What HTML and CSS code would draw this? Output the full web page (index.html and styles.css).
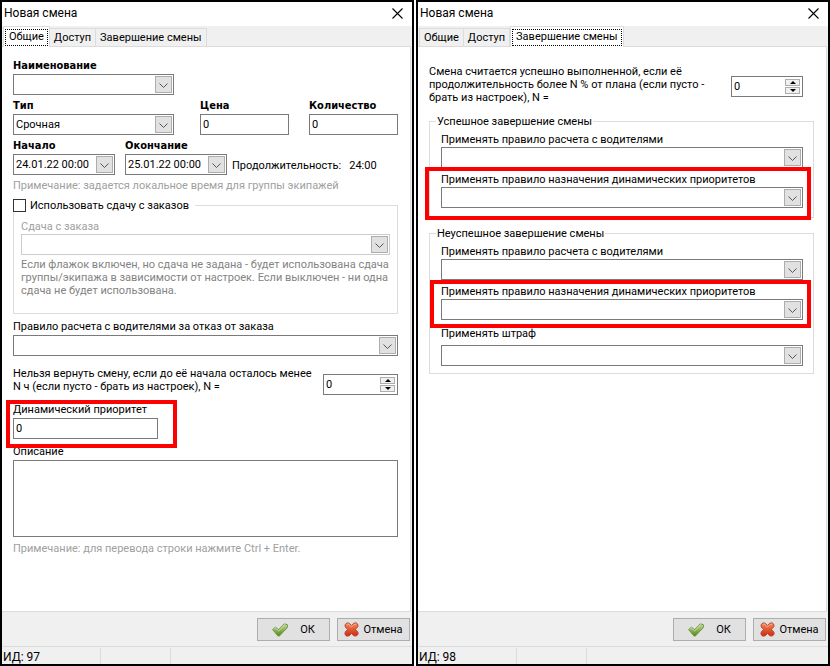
FILE: index.html
```
<!DOCTYPE html>
<html lang="ru">

<head>
    <meta charset="utf-8">
    <meta name="viewport" content="width=device-width, initial-scale=1.0">
    <title>Новая смена</title>
    <link rel="stylesheet" href="styles.css">
</head>

<body>

    <!-- icons used by both windows -->
    <svg class="sprite" aria-hidden="true">
        <defs>
            <linearGradient id="green" x1="0" y1="0" x2="0" y2="1">
                <stop offset="0" stop-color="#c5dc9c" />
                <stop offset="1" stop-color="#4f8a10" />
            </linearGradient>
            <linearGradient id="red" x1="0" y1="0" x2="0" y2="1">
                <stop offset="0" stop-color="#f08a5c" />
                <stop offset="1" stop-color="#cf2a0c" />
            </linearGradient>
        </defs>
        <symbol id="close" viewBox="0 0 11 11">
            <path d="M0.5 0.5L10.5 10.5M10.5 0.5L0.5 10.5" fill="none" stroke="#000" stroke-width="1.1" />
        </symbol>
        <symbol id="check" viewBox="0 0 16 14">
            <path d="M0.6 6.6L3.4 4.2L6.6 6.6L12.4 0.8L15.5 1.8L15.3 4.6L7.2 13.2L5.6 12.6Z" fill="url(#green)" stroke="#6c8f45" stroke-width="0.9" stroke-linejoin="round" />
            <path d="M2 6.2L3.4 5.2L6.6 7.8L12.8 1.8" fill="none" stroke="#e3efcb" stroke-width="0.7" />
        </symbol>
        <symbol id="cross" viewBox="0 0 15 15">
            <path d="M1.2 2.4L3.2 0.8L5.4 1.4L7.5 3.4L9.8 1.2L12.2 0.8L14 2.6L13.8 4.8L11.4 7.3L13.8 10L14.2 12.2L12.2 14L9.8 13.8L7.5 11.6L5.2 13.8L2.8 14.2L0.9 12.4L1.2 10L3.6 7.4L1.2 5Z" fill="url(#red)" stroke="#b5402c" stroke-width="0.9" stroke-linejoin="round" />
            <path d="M2.4 3L3.6 2L5 2.6L7.5 5L10 2.4L12 2.2" fill="none" stroke="#f9b898" stroke-width="0.8" />
        </symbol>
    </svg>

    <section class="window">
        <header class="titlebar">
            <h1>Новая смена</h1>
            <button class="close" aria-label="Закрыть"><svg><use href="#close" /></svg></button>
        </header>

        <nav class="tabs">
            <button class="tab valgt"><span>Общие</span></button>
            <button class="tab"><span>Доступ</span></button>
            <button class="tab"><span>Завершение смены</span></button>
        </nav>

        <main class="pane">
            <div class="row">
                <div class="field wide">
                    <label class="bold" for="name">Наименование</label>
                    <select id="name"><option></option></select>
                </div>
                <div class="field short"></div>
                <div class="field short"></div>
            </div>
            <div class="row">
                <div class="field wide">
                    <label class="bold" for="type">Тип</label>
                    <select id="type"><option>Срочная</option></select>
                </div>
                <div class="field short">
                    <label class="bold" for="price">Цена</label>
                    <input type="text" id="price" value="0">
                </div>
                <div class="field short">
                    <label class="bold" for="count">Количество</label>
                    <input type="text" id="count" value="0">
                </div>
            </div>
            <div class="row dates">
                <div class="field date">
                    <label class="bold" for="begin">Начало</label>
                    <select id="begin"><option>24.01.22 00:00</option></select>
                </div>
                <div class="field date">
                    <label class="bold" for="end">Окончание</label>
                    <select id="end"><option>25.01.22 00:00</option></select>
                </div>
                <p class="duration"><span>Продолжительность:</span><span>24:00</span></p>
            </div>
            <p class="note">Примечание: задается локальное время для группы экипажей</p>

            <fieldset class="change">
                <legend><label><input type="checkbox">Использовать сдачу с заказов</label></legend>
                <div class="field">
                    <label for="change">Сдача с заказа</label>
                    <select id="change" disabled><option></option></select>
                </div>
                <p class="hint">Если флажок включен, но сдача не задана - будет использована сдача<br>группы/экипажа в зависимости от настроек. Если выключен - ни одна<br>сдача не будет использована.</p>
            </fieldset>

            <div class="field rule">
                <label for="refuse">Правило расчета с водителями за отказ от заказа</label>
                <select id="refuse"><option></option></select>
            </div>

            <div class="ask ask-return">
                <label for="hours">Нельзя вернуть смену, если до её начала осталось менее<br>N ч (если пусто - брать из настроек), N =</label>
                <div class="spin">
                    <input type="text" id="hours" value="0">
                    <div class="arrows"><button aria-label="Больше"></button><button aria-label="Меньше"></button></div>
                </div>
            </div>

            <div class="field priority marked">
                <label for="priority">Динамический приоритет</label>
                <input type="text" id="priority" value="0">
            </div>

            <div class="field about">
                <label for="about">Описание</label>
                <textarea id="about"></textarea>
            </div>
            <p class="note">Примечание: для перевода строки нажмите Ctrl + Enter.</p>
        </main>

        <div class="actions">
            <button class="action ok"><svg><use href="#check" /></svg>ОК</button>
            <button class="action"><svg><use href="#cross" /></svg>Отмена</button>
        </div>
        <footer class="status"><span class="id">ИД: 97</span><span class="cell"></span></footer>
    </section>

    <section class="window">
        <header class="titlebar">
            <h1>Новая смена</h1>
            <button class="close" aria-label="Закрыть"><svg><use href="#close" /></svg></button>
        </header>

        <nav class="tabs">
            <button class="tab"><span>Общие</span></button>
            <button class="tab"><span>Доступ</span></button>
            <button class="tab valgt"><span>Завершение смены</span></button>
        </nav>

        <main class="pane">
            <div class="ask ask-done">
                <label for="percent">Смена считается успешно выполненной, если её<br>продолжительность более N % от плана (если пусто -<br>брать из настроек), N =</label>
                <div class="spin">
                    <input type="text" id="percent" value="0">
                    <div class="arrows"><button aria-label="Больше"></button><button aria-label="Меньше"></button></div>
                </div>
            </div>

            <fieldset class="result">
                <legend>Успешное завершение смены</legend>
                <div class="field">
                    <label for="rule1">Применять правило расчета с водителями</label>
                    <select id="rule1"><option></option></select>
                </div>
                <div class="field marked">
                    <label for="dyn1">Применять правило назначения динамических приоритетов</label>
                    <select id="dyn1"><option></option></select>
                </div>
            </fieldset>

            <fieldset class="result failed">
                <legend>Неуспешное завершение смены</legend>
                <div class="field">
                    <label for="rule2">Применять правило расчета с водителями</label>
                    <select id="rule2"><option></option></select>
                </div>
                <div class="field marked">
                    <label for="dyn2">Применять правило назначения динамических приоритетов</label>
                    <select id="dyn2"><option></option></select>
                </div>
                <div class="field fine">
                    <label for="fine">Применять штраф</label>
                    <select id="fine"><option></option></select>
                </div>
            </fieldset>
        </main>

        <div class="actions">
            <button class="action ok"><svg><use href="#check" /></svg>ОК</button>
            <button class="action"><svg><use href="#cross" /></svg>Отмена</button>
        </div>
        <footer class="status"><span class="id">ИД: 98</span><span class="cell"></span></footer>
    </section>

</body>

</html>
```
FILE: styles.css
```
* {
    box-sizing: border-box;
}

body {
    margin: 0;
    min-height: 100vh;
    display: grid;
    grid-template-columns: 1fr 1fr;
    gap: 2px;
    background-color: white;
    color: black;
    font-family: Roboto, "Noto Sans", sans-serif;
    font-size: 11px;
    line-height: 13px;
}

h1,
p,
fieldset,
legend {
    margin: 0;
    padding: 0;
}

button,
input,
select,
textarea {
    font: inherit;
    color: inherit;
    margin: 0;
    border-radius: 0;
}

.sprite {
    position: absolute;
    width: 0;
    height: 0;
}

.window {
    display: flex;
    flex-direction: column;
    min-width: 0;
    border: 2px solid black;
    background-color: #f0f0f0;
}

/* title */
.titlebar {
    display: flex;
    align-items: center;
    justify-content: space-between;
    height: 24px;
    padding: 0 9px 2px 2px;
    background-color: white;
}

h1 {
    font-size: 12px;
    font-weight: normal;
}

.close {
    padding: 0;
    border: none;
    background: none;
}

.close svg {
    display: block;
    width: 11px;
    height: 11px;
}

/* tabs */
.tabs {
    display: flex;
    align-items: flex-end;
    height: 20px;
    padding-left: 1px;
}

.tab {
    height: 18px;
    padding: 0 4px;
    border: 1px solid #dcdcdc;
    border-width: 1px 1px 0 0;
    background-color: #f0f0f0;
    white-space: nowrap;
}

.tab:first-child {
    border-left-width: 1px;
}

.tab.valgt {
    position: relative;
    height: 21px;
    margin-bottom: -1px;
    padding: 0 1px;
    border-left-width: 1px;
    background-color: white;
}

.valgt span {
    display: block;
    height: 17px;
    padding: 0 3px;
    border: 1px dotted black;
}

/* page of a tab */
.pane {
    flex: 1;
    margin-right: 1px;
    padding: 12px 12px 12px 11px;
    border: 1px solid #dcdcdc;
    border-left: none;
    background-color: white;
}

.row {
    display: flex;
    gap: 20px;
    margin-bottom: 4px;
}

.field {
    display: flex;
    flex-direction: column;
    gap: 2px;
    min-width: 0;
}

.wide {
    flex: 161;
    margin-right: 6px;
}

.short {
    flex: 89;
}

.dates {
    gap: 10px;
}

.date {
    flex: 0 0 102px;
}

.bold {
    font-family: "DejaVu Sans Condensed", "DejaVu Sans", sans-serif;
    font-weight: bold;
}

.duration {
    display: flex;
    gap: 8px;
    align-self: flex-end;
    margin: 0 0 3px -5px;
    white-space: nowrap;
}

input[type="text"],
select,
textarea {
    width: 100%;
    height: 21px;
    padding: 0 2px;
    border: 1px solid #7a7a7a;
    background-color: white;
    outline: none;
}

select {
    appearance: none;
    background-image: url("data:image/svg+xml,%3Csvg xmlns='http://www.w3.org/2000/svg' width='17' height='17'%3E%3Crect x='.5' y='.5' width='16' height='16' fill='%23e1e1e1' stroke='%23adadad'/%3E%3Cpath d='M4.5 7.5l4 4 4-4' fill='none' stroke='%23555'/%3E%3C/svg%3E");
    background-repeat: no-repeat;
    background-position: right 1px center;
}

select:disabled {
    border-color: #ccc;
    opacity: 1;
}

textarea {
    display: block;
    height: 77px;
    resize: none;
}

.note {
    color: #a0a0a0;
}

/* group boxes */
fieldset {
    min-width: 0;
    border: 1px solid #dcdcdc;
}

.change {
    margin-top: 7px;
    padding: 8px 7px 16px 7px;
}

.change legend {
    margin-left: -8px;
    padding-right: 6px;
    background-color: white;
}

.change legend label {
    display: flex;
    gap: 4px;
}

.change .field {
    gap: 1px;
    color: #a0a0a0;
}

.change input {
    appearance: none;
    width: 13px;
    height: 13px;
    border: 1px solid #333;
    background-color: white;
}

.hint {
    margin-top: 3px;
    color: #838383;
    white-space: nowrap;
}

.rule {
    margin-top: 6px;
}

/* question with a spinner */
.ask {
    display: flex;
    justify-content: space-between;
    white-space: nowrap;
}

.ask-return {
    margin: 11px 0 8px;
}

.ask-return .spin {
    width: 75px;
    margin-top: 7px;
}

.ask-done {
    margin: 6px 11px 11px 0;
}

.ask-done .spin {
    margin-top: 11px;
}

.spin {
    display: flex;
    width: 72px;
    height: 21px;
    padding: 2px;
    border: 1px solid #7a7a7a;
}

.spin input[type="text"] {
    flex: 1;
    min-width: 0;
    height: 15px;
    padding: 0;
    border: none;
}

.arrows {
    display: flex;
    flex-direction: column;
    gap: 1px;
    width: 15px;
}

.arrows button {
    flex: 1;
    display: grid;
    place-items: center;
    padding: 0;
    border: 1px solid #adadad;
    background-color: #f0f0f0;
}

.arrows button::before {
    content: "";
    border: 3px solid transparent;
    border-top: none;
    border-bottom-color: black;
}

.arrows button + button::before {
    border-top: 3px solid black;
    border-bottom: none;
}

.priority {
    width: 145px;
}

.about {
    margin: 6px 0 5px;
}

.result {
    padding: 5px 10px 9px 11px;
}

.result legend {
    margin-left: -5px;
    padding: 0 1px;
}

.result .field {
    gap: 1px;
    margin-bottom: 5px;
}

.result .field:last-child {
    margin-bottom: 0;
}

.failed {
    margin-top: 9px;
    padding-bottom: 7px;
}

.failed .fine {
    gap: 5px;
    margin-top: 7px;
}

/* red frames */
.marked {
    position: relative;
}

.marked::after {
    content: "";
    position: absolute;
    inset: -6px -8px -12px -16px;
    border: 4px solid red;
    pointer-events: none;
}

.priority.marked::after {
    inset: -3px -19px -9px -7px;
}

.failed .marked::after {
    inset: -5px -8px -8px -11px;
}

/* bottom of the window */
.actions {
    display: flex;
    justify-content: flex-end;
    gap: 7px;
    padding: 6px 2px 5px;
}

.action {
    display: flex;
    align-items: center;
    justify-content: center;
    gap: 4px;
    width: 73px;
    height: 23px;
    padding: 0;
    border: 1px solid #adadad;
    background-color: #e1e1e1;
}

.action svg {
    width: 15px;
    height: 15px;
}

.ok {
    gap: 12px;
}

.ok svg {
    width: 16px;
    height: 14px;
}

.status {
    display: flex;
    height: 18px;
    padding-top: 1px;
    border-top: 1px solid #dcdcdc;
    font-size: 12px;
    line-height: 18px;
}

.id {
    width: 99px;
    padding-left: 1px;
    border-right: 1px solid #dcdcdc;
}

.cell {
    width: 70px;
    border-right: 1px solid #dcdcdc;
}
```
